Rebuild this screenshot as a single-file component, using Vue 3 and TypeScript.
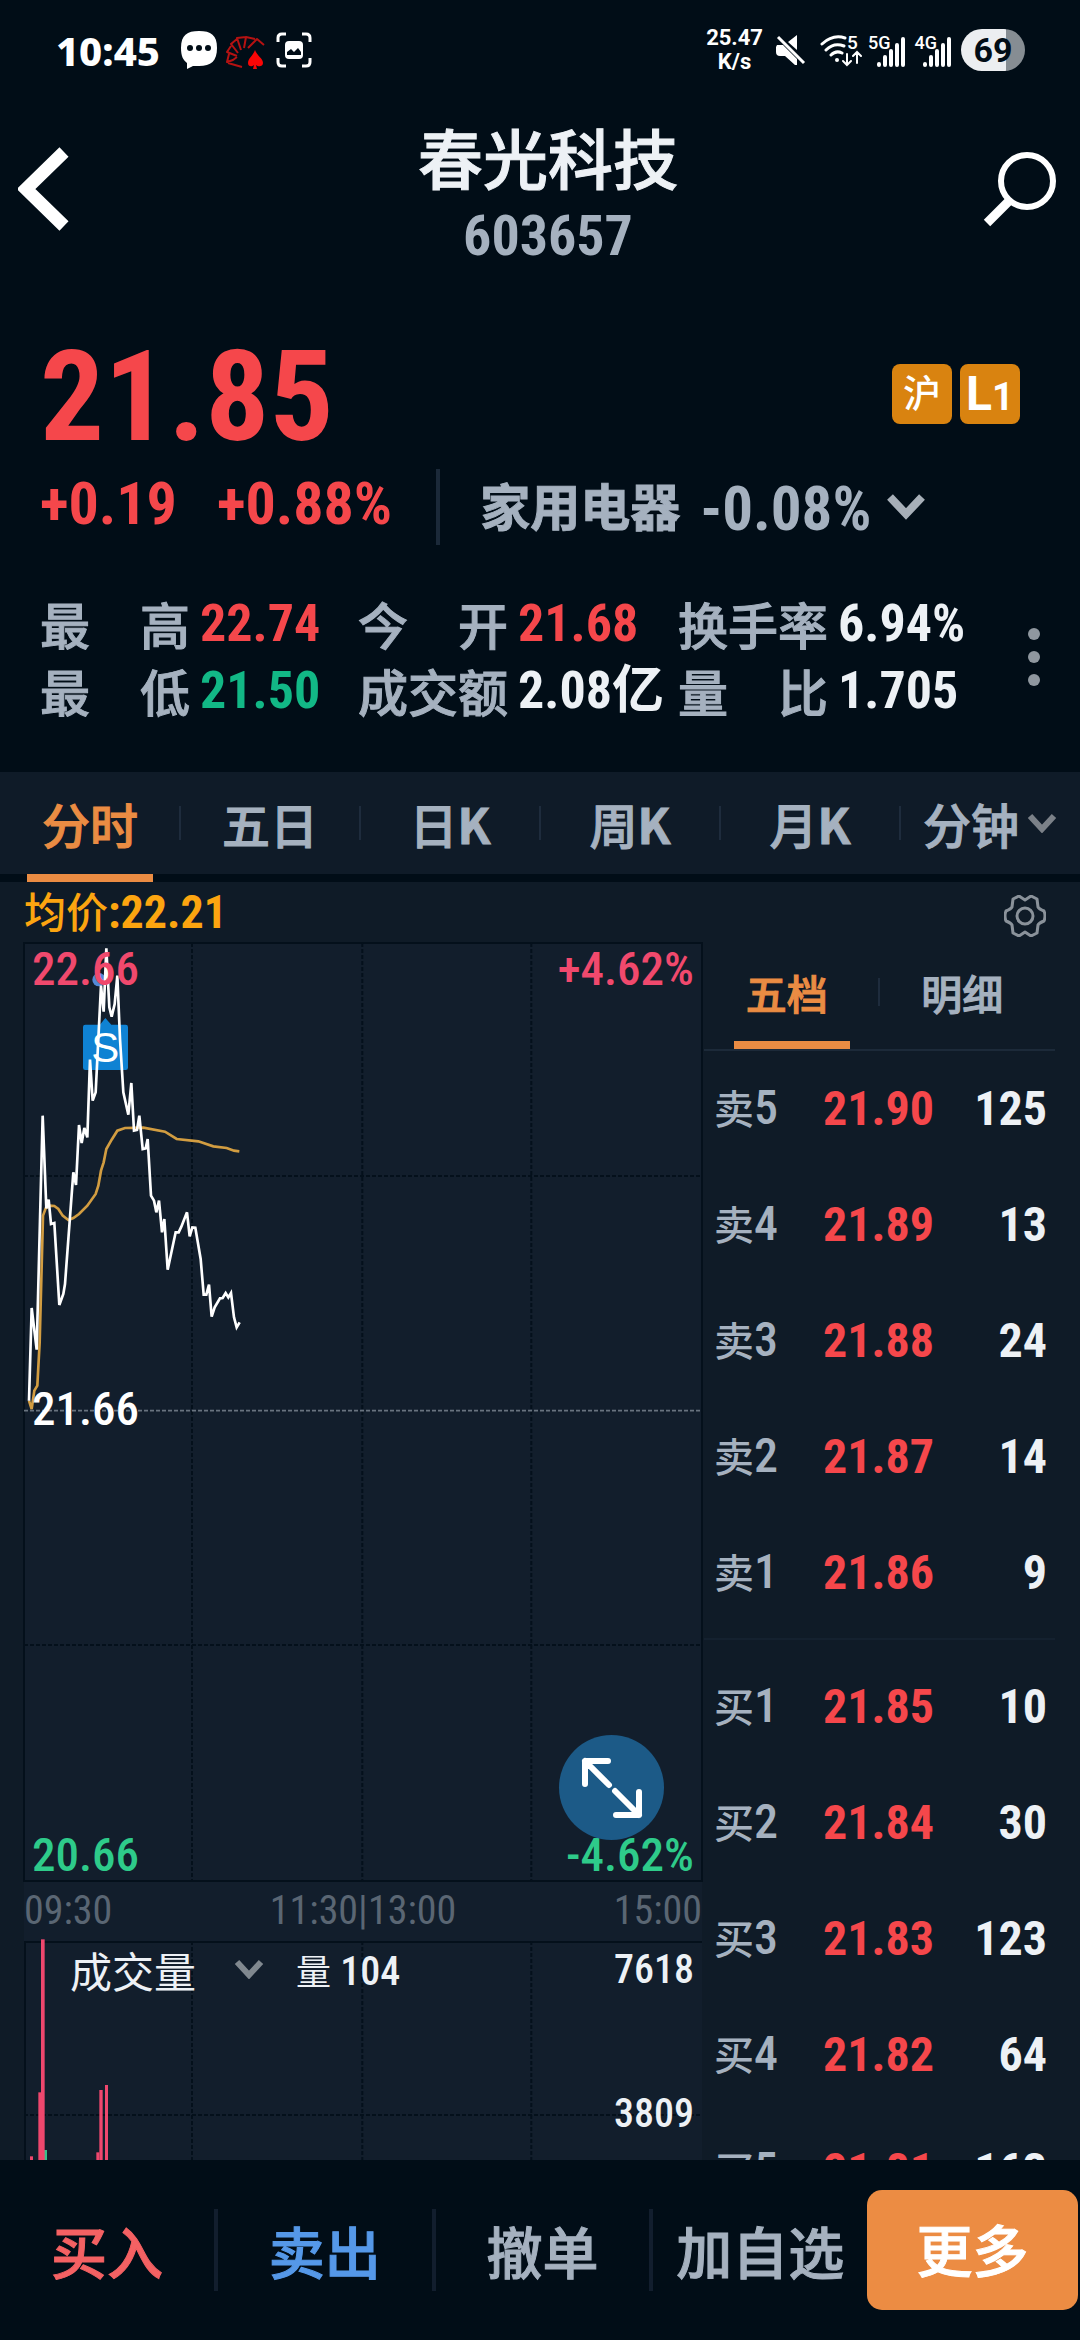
<script setup lang="ts">
import { ref } from 'vue'

interface Stat { label: string; value: string; tone: 'up' | 'down' | 'plain' }
interface Level { level: number; price: string; volume: string }
interface Side { name: string; levels: Level[] }
interface Bar { x: number; width: number; top: number; tone: 'up' | 'down' }
interface Period { text: string; latin?: string; menu?: boolean }

const stats: Stat[] = [
  { label: '最 高', value: '22.74', tone: 'up' },
  { label: '今 开', value: '21.68', tone: 'up' },
  { label: '换手率', value: '6.94%', tone: 'plain' },
  { label: '最 低', value: '21.50', tone: 'down' },
  { label: '成交额', value: '2.08亿', tone: 'plain' },
  { label: '量 比', value: '1.705', tone: 'plain' },
]

const periods: Period[] = [
  { text: '分时' },
  { text: '五日' },
  { text: '日', latin: 'K' },
  { text: '周', latin: 'K' },
  { text: '月', latin: 'K' },
  { text: '分钟', menu: true },
]
const period = ref('分时')

const bookTabs: string[] = ['五档', '明细']
const bookTab = ref('五档')

const sides: Side[] = [
  {
    name: '卖',
    levels: [
      { level: 5, price: '21.90', volume: '125' },
      { level: 4, price: '21.89', volume: '13' },
      { level: 3, price: '21.88', volume: '24' },
      { level: 2, price: '21.87', volume: '14' },
      { level: 1, price: '21.86', volume: '9' },
    ],
  },
  {
    name: '买',
    levels: [
      { level: 1, price: '21.85', volume: '10' },
      { level: 2, price: '21.84', volume: '30' },
      { level: 3, price: '21.83', volume: '123' },
      { level: 4, price: '21.82', volume: '64' },
      { level: 5, price: '21.81', volume: '163' },
    ],
  },
]

const priceLine =
  '87,1415 95,1137 110,1262 128,560 139,838 146,812 153,885 163,882 178,1128 190,1095 195,1065 220,730 228,768 237,588 245,642 253,597 262,625 270,392 278,515 287,490 303,170 311,248 319,58 328,235 335,263 344,225 352,140 360,330 370,490 385,557 394,462 402,605 411,603 418,560 428,660 437,658 443,630 453,800 462,815 469,850 477,815 486,910 493,870 503,1022 527,910 536,910 544,893 561,850 569,922 577,895 586,896 602,990 611,1097 619,1097 627,1067 635,1163 644,1135 660,1108 668,1107 677,1092 685,1105 693,1092 702,1165 710,1195 719,1180'
const averageLine =
  '87,1415 95,1440 103,1385 112,1370 119,1240 124,1050 129,860 137,838 150,830 163,831 175,840 188,860 205,873 220,867 237,855 262,830 287,795 295,770 303,725 311,700 319,660 335,632 352,605 375,597 430,596 495,608 530,630 595,637 640,652 680,657 702,665 718,667'

const bars: Bar[] = [
  { x: 90, width: 9, top: 1012, tone: 'up' },
  { x: 115, width: 9, top: 820, tone: 'up' },
  { x: 131, width: 10, top: 993, tone: 'down' },
  { x: 123, width: 11, top: 361, tone: 'up' },
  { x: 289, width: 9, top: 1000, tone: 'up' },
  { x: 298, width: 10, top: 813, tone: 'up' },
  { x: 315, width: 9, top: 798, tone: 'up' },
]
const columns: number[] = [576, 1087, 1594]
const signals: string[] = ['5G', '4G']
</script>

<template>
  <div class="app">
    <div class="status">
      <div class="status-side">
        <span class="clock">10:45</span>
        <svg class="chat" width="38" height="40" viewBox="0 0 38 40">
          <path d="M19 1C31 1 37 5 37 18S31 36 19 36H13L7 39V33C3 30 1 26 1 18C1 5 7 1 19 1Z" fill="#fff" />
          <circle cx="10" cy="18" r="3" fill="#010d17" /><circle cx="19" cy="18" r="3" fill="#010d17" /><circle cx="28" cy="18" r="3" fill="#010d17" />
        </svg>
        <svg class="cards" width="40" height="34" viewBox="0 0 40 34">
          <g fill="none" stroke="#b51212" stroke-width="2" stroke-linejoin="round">
            <path d="M38 9L31 3L22 12M29 3L20 1L18 12M20 1L11 2L15 14M11 3L5 8L12 17M5 10L1 16L11 20M3 18L1 26L7 24L11 21M2 27L16 31" />
          </g>
          <path d="M29 14C31 20 37 22 37 27C37 31 32 31 30 29L31 33H27L28 29C26 31 22 31 22 27C22 22 27 20 29 14Z" fill="#fa0606" />
        </svg>
        <svg width="36" height="36" viewBox="0 0 36 36">
          <path d="M2 10V6Q2 2 6 2H10M26 2H30Q34 2 34 6V10M34 26V30Q34 34 30 34H26M10 34H6Q2 34 2 30V26" fill="none" stroke="#fff" stroke-width="3" />
          <rect x="9" y="9" width="18" height="18" rx="4" fill="#fff" />
          <path d="M11 23V20L15 17L18 20L22 16L25 20V23Z" fill="#010d17" />
        </svg>
      </div>
      <div class="status-side">
        <span class="speed">25.47<br />K/s</span>
        <svg class="mute" width="32" height="32" viewBox="0 0 32 32">
          <path d="M22 1V16L13 8ZM2 11H8L22 25V31H20L10 22H5Q1 22 1 18V13Z" fill="#fff" />
          <path d="M3 3L29 29" stroke="#fff" stroke-width="3" />
        </svg>
        <svg class="wifi" width="42" height="34" viewBox="0 0 42 34">
          <g fill="none" stroke="#fff" stroke-width="3" stroke-linecap="round">
            <path d="M2 10Q13 0 25 4M6 16Q14 8 24 12M11 21Q16 16 22 19" />
            <path d="M27 20V31M23 27L27 31L31 27M37 29V18M33 22L37 18L41 22" stroke-width="2" />
          </g>
          <circle cx="17" cy="26" r="2" fill="#fff" />
          <text x="27" y="15" class="wifi-band">5</text>
        </svg>
        <span v-for="name in signals" :key="name" class="signal">
          <b>{{ name }}</b>
          <svg width="28" height="30" viewBox="0 0 28 30">
            <path d="M2 28V27M8 28V20M14 28V14M20 28V8M26 28V2" stroke="#fff" stroke-width="4" stroke-linecap="round" />
          </svg>
        </span>
        <span class="battery">69</span>
      </div>
    </div>

    <header class="header">
      <button class="icon-button back" aria-label="返回">
        <svg width="52" height="84" viewBox="0 0 52 84"><path d="M46 5L8 42L46 79" fill="none" stroke="#fff" stroke-width="13" /></svg>
      </button>
      <div class="names">
        <h1>春光科技</h1>
        <p>603657</p>
      </div>
      <button class="icon-button" aria-label="搜索">
        <svg width="76" height="76" viewBox="0 0 76 76">
          <circle cx="45" cy="30" r="26" fill="none" stroke="#fff" stroke-width="6" />
          <path d="M28 49L5 72" stroke="#fff" stroke-width="9" />
        </svg>
      </button>
    </header>

    <section class="quote">
      <div class="price-row">
        <span class="price up">21.85</span>
        <span class="badge">沪</span>
        <span class="badge level">L<small>1</small></span>
      </div>
      <div class="change-row">
        <span class="up">+0.19</span>
        <span class="up percent">+0.88%</span>
        <button class="sector">
          <span class="sector-name">家用电器</span><span class="sector-change">-0.08%</span>
          <svg width="38" height="28" viewBox="0 0 38 28"><path d="M3 4L19 21L35 4" fill="none" stroke="#a7afb8" stroke-width="8" /></svg>
        </button>
      </div>
      <div class="stats-row">
        <dl class="stats">
          <div v-for="stat in stats" :key="stat.label">
            <dt>{{ stat.label }}</dt>
            <dd :class="stat.tone">{{ stat.value }}</dd>
          </div>
        </dl>
        <button class="icon-button" aria-label="更多指标">
          <svg width="12" height="60" viewBox="0 0 12 60" fill="#8f979f"><circle cx="6" cy="7" r="6" /><circle cx="6" cy="30" r="6" /><circle cx="6" cy="53" r="6" /></svg>
        </button>
      </div>
    </section>

    <nav class="periods">
      <button v-for="item in periods" :key="item.text" :class="{ active: item.text === period }" @click="period = item.text">
        <span>{{ item.text }}<b v-if="item.latin">{{ item.latin }}</b></span>
        <svg v-if="item.menu" width="30" height="20" viewBox="0 0 30 20"><path d="M3 3L15 16L27 3" fill="none" stroke="#7b8188" stroke-width="6" /></svg>
      </button>
    </nav>

    <main class="body">
      <div class="average-row">
        <span class="average-price">均价<b>:22.21</b></span>
        <button class="settings" aria-label="设置">
          <svg width="42" height="42" viewBox="0 0 42 42" fill="none" stroke="#8a929a" stroke-width="3">
            <path d="M15 1L21 5L27 1L33 4L34 12Q35 14 40 16Q42 21 40 26Q35 28 34 30L33 38L27 41L21 37L15 41L9 38L8 30Q7 28 2 26Q0 21 2 16Q7 14 8 12L9 4Z" stroke-linejoin="round" />
            <circle cx="21" cy="21" r="8" />
          </svg>
        </button>
      </div>

      <div class="panels">
        <div class="charts">
          <div class="chart">
            <svg class="plot" viewBox="72 42 2034 2814" preserveAspectRatio="none">
              <g class="grid">
                <line v-for="x in columns" :key="x" :x1="x" :x2="x" y1="42" y2="2856" />
                <line x1="72" x2="2106" y1="741" y2="741" />
                <line x1="72" x2="2106" y1="2148" y2="2148" />
              </g>
              <line class="base" x1="72" x2="2106" y1="1445" y2="1445" />
              <polyline :points="averageLine" class="average" />
              <circle cx="297" cy="152" r="20" fill="#5389d8" />
              <path d="M256 287H300L316 267L334 287H377Q384 287 384 294V416Q384 423 377 423H256Q249 423 249 416V294Q249 287 256 287Z" fill="#0f82d3" />
              <polyline :points="priceLine" class="price-line" />
              <text x="316" y="400" class="marker">S</text>
            </svg>
            <span class="tag top left up-pink">22.66</span>
            <span class="tag top right up-pink">+4.62%</span>
            <span class="tag middle left">21.66</span>
            <span class="tag bottom left down-green">20.66</span>
            <span class="tag bottom right down-green">-4.62%</span>
            <button class="expand" aria-label="全屏">
              <svg width="64" height="64" viewBox="0 0 64 64" fill="none" stroke="#fff" stroke-width="6" stroke-linecap="round" stroke-linejoin="round">
                <path d="M5 28V5H28M5 5L29 29M59 36V59H36M59 59L35 35" />
              </svg>
            </button>
          </div>
          <div class="times"><span>09:30</span><span>11:30|13:00</span><span>15:00</span></div>
          <div class="volume">
            <svg class="plot" viewBox="72 366 2034 1044" preserveAspectRatio="none">
              <g class="grid">
                <line v-for="x in columns" :key="x" :x1="x" :x2="x" y1="366" y2="1410" />
                <line x1="72" x2="2106" y1="888" y2="888" />
              </g>
              <rect v-for="bar in bars" :key="bar.x" :x="bar.x" :y="bar.top" :width="bar.width" :height="1410 - bar.top" :class="bar.tone" />
            </svg>
            <div class="volume-head">
              <button>成交量
                <svg width="30" height="20" viewBox="0 0 30 20"><path d="M3 3L15 16L27 3" fill="none" stroke="#80888f" stroke-width="6" /></svg>
              </button>
              <span class="amount"><i>量</i> 104</span>
              <span class="peak">7618</span>
            </div>
            <span class="half">3809</span>
          </div>
        </div>

        <aside class="book">
          <div class="book-tabs">
            <button v-for="item in bookTabs" :key="item" :class="{ active: item === bookTab }" @click="bookTab = item">{{ item }}</button>
          </div>
          <div v-for="side in sides" :key="side.name" class="side">
            <table>
              <tbody>
                <tr v-for="row in side.levels" :key="row.level">
                  <th scope="row">{{ side.name }}<b>{{ row.level }}</b></th>
                  <td class="up">{{ row.price }}</td>
                  <td>{{ row.volume }}</td>
                </tr>
              </tbody>
            </table>
          </div>
        </aside>
      </div>
    </main>

    <footer class="actions">
      <button class="buy">买入</button>
      <button class="sell">卖出</button>
      <button>撤单</button>
      <button>加自选</button>
      <button class="more">更多</button>
    </footer>
  </div>
</template>

<style>
body {
  margin: 0;
  background: #010d17;
}
</style>

<style scoped>
.app {
  display: flex;
  flex-direction: column;
  height: 100vh;
  overflow: hidden;
  background: #010d17;
  color: #a5b1bf;
  font-family: "Roboto Condensed", "Noto Sans CJK SC", sans-serif;
  font-weight: 500;
}
button {
  padding: 0;
  border: 0;
  background: none;
  color: inherit;
  font: inherit;
  cursor: pointer;
}
svg {
  display: block;
  flex: none;
}
.up { color: #f5474b; fill: #ee476d; }
.down { color: #12b886; fill: #37bf8b; }
.plain { color: #edf1f5; }

.names h1,
.sector-name,
.stats dt,
.periods button,
.book-tabs button,
.actions button {
  font-family: "Noto Sans CJK SC", sans-serif;
  -webkit-text-stroke: 1px currentColor;
}

.status {
  display: flex;
  flex: none;
  justify-content: space-between;
  height: 100px;
  padding: 0 55px 0 56px;
  color: #fff;
  font-family: "Roboto", sans-serif;
}
.status-side {
  display: flex;
  align-items: center;
}
.clock {
  margin-right: 20px;
  font-family: "Noto Sans", sans-serif;
  font-size: 40px;
  font-weight: 800;
}
.chat { margin-right: 8px; }
.cards { margin: 6px 10px 0 0; }
.speed {
  font-size: 22px;
  font-weight: 700;
  line-height: 24px;
  text-align: center;
}
.mute { margin: 0 13px 0 12px; }
.wifi { margin: 2px 6px 0 0; }
.wifi-band {
  fill: #fff;
  font-size: 19px;
}
.signal {
  display: flex;
  margin-right: 10px;
}
.signal b {
  margin-right: -14px;
  font-size: 18px;
  font-weight: 500;
  line-height: 20px;
}
.signal svg { margin-top: 4px; }
.battery {
  width: 64px;
  height: 42px;
  border-radius: 21px;
  background: linear-gradient(90deg, #eceef1 70%, #868d93 70%);
  color: #010d17;
  font-size: 34px;
  font-weight: 700;
  line-height: 42px;
  text-align: center;
}

.header {
  display: flex;
  justify-content: space-between;
  padding: 18px 22px 0 18px;
}
.header .icon-button {
  display: flex;
  width: 76px;
  height: 142px;
  align-items: center;
}
.header .back { width: 96px; }
.names { text-align: center; }
.names h1 {
  margin: 0 0 12px;
  color: #edf1f5;
  font-size: 65px;
  font-weight: 500;
  line-height: 76px;
}
.names p {
  margin: 0;
  font-size: 56px;
  font-weight: 700;
  line-height: 60px;
}

.quote { padding: 76px 40px 48px; }
.price-row {
  display: flex;
  align-items: center;
}
.price {
  margin-right: auto;
  font-size: 127px;
  font-weight: 700;
  line-height: 110px;
}
.badge {
  width: 60px;
  height: 60px;
  margin: 0 8px 6px 0;
  border-radius: 8px;
  background: #d98310;
  color: #fff;
  font-size: 38px;
  line-height: 60px;
  text-align: center;
}
.badge.level {
  margin-right: 20px;
  font-family: "Roboto", sans-serif;
  font-size: 48px;
  font-weight: 700;
}
.badge small { font-size: 38px; }
.change-row {
  display: flex;
  height: 76px;
  margin-top: 17px;
  font-size: 60px;
  font-weight: 700;
  line-height: 70px;
}
.percent { margin-left: 40px; }
.sector {
  display: flex;
  margin-left: 44px;
  padding-left: 40px;
  border-left: 4px solid #1b2939;
}
.sector-name { font-size: 50px; }
.sector-change {
  margin: 5px 16px 0 20px;
  font-size: 61px;
}
.sector svg { margin-top: 24px; }
.stats-row {
  display: flex;
  justify-content: space-between;
  align-items: center;
  margin-top: 45px;
}
.stats {
  display: grid;
  flex: 1;
  grid-template-columns: 318px 320px 1fr;
  margin: 0;
}
.stats div {
  display: flex;
  line-height: 67px;
  white-space: nowrap;
}
.stats dt {
  width: 150px;
  margin-right: 10px;
  font-size: 50px;
  text-align-last: justify;
}
.stats dd {
  margin: 0;
  font-size: 52px;
  font-weight: 700;
}

.periods {
  display: flex;
  height: 102px;
  background: #0f1b28;
  border-bottom: 8px solid #010d17;
  flex: none;
}
.periods button {
  position: relative;
  display: flex;
  flex: 1;
  align-items: center;
  justify-content: center;
  gap: 8px;
  font-size: 48px;
}
.periods button + button::before {
  position: absolute;
  left: -1px;
  width: 2px;
  height: 34px;
  background: #1e2c3d;
  content: "";
}
.periods .active { color: #ea8c43; }
.periods .active::after {
  position: absolute;
  right: 27px;
  bottom: -8px;
  left: 27px;
  height: 8px;
  background: #ea8c43;
  content: "";
}

.body {
  flex: 1;
  min-height: 0;
  overflow: hidden;
  background: #0f1b27;
}
.average-row {
  display: flex;
  justify-content: space-between;
  align-items: center;
  height: 61px;
  padding: 0 34px 0 24px;
  color: #fca510;
}
.average-price {
  font-size: 42px;
  line-height: 50px;
}
.average-price b { font-size: 46px; }
.settings { margin-top: 6px; }
.panels { display: flex; }
.charts {
  width: 65%;
  box-sizing: border-box;
  padding-left: 24px;
}
.chart, .volume {
  position: relative;
  box-sizing: border-box;
  background: #121e2c;
}
.chart {
  height: 938px;
  outline: 2px solid #04101b;
  outline-offset: -1px;
}
.volume {
  height: 348px;
  border-top: 2px solid #04101b;
  border-left: 2px solid #04101b;
}
.plot {
  position: absolute;
  inset: 0;
  width: 100%;
  height: 100%;
}
.volume .plot {
  inset: -2px;
  width: calc(100% + 2px);
  height: 348px;
  overflow: visible;
}
.grid {
  stroke: #04101b;
  stroke-width: 6;
  stroke-dasharray: 12 6;
}
.base {
  stroke: #68737f;
  stroke-width: 5;
  stroke-dasharray: 12 6;
}
.price-line, .average {
  fill: none;
  stroke: #fff;
  stroke-width: 8;
}
.average { stroke: #d29d41; }
.marker {
  fill: #fff;
  font: 126px "Liberation Sans", sans-serif;
  text-anchor: middle;
}
.tag {
  position: absolute;
  color: #fff;
  font-size: 47px;
  line-height: 52px;
}
.left { left: 8px; }
.right { right: 8px; }
.top { top: 0; }
.middle { top: 440px; }
.bottom { bottom: 0; }
.up-pink { color: #f0496d; }
.down-green { color: #2ecb8a; }
.expand {
  position: absolute;
  right: 38px;
  bottom: 41px;
  display: grid;
  width: 105px;
  height: 105px;
  place-items: center;
  border-radius: 50%;
  background: #1c5a87;
}
.times {
  display: flex;
  justify-content: space-between;
  background: #121e2c;
  color: #5a6673;
  font-size: 40px;
  font-weight: 400;
  line-height: 60px;
}
.volume-head {
  position: relative;
  display: flex;
  align-items: center;
  height: 52px;
  padding: 0 8px 0 44px;
  color: #edf1f5;
  font-size: 40px;
}
.volume-head button {
  display: flex;
  align-items: center;
  gap: 38px;
  font-size: 42px;
  font-weight: 400;
}
.amount { margin-left: 32px; }
.amount i {
  font-size: 35px;
  font-style: normal;
  font-weight: 400;
}
.peak { margin-left: auto; }
.half {
  position: absolute;
  top: 143px;
  right: 8px;
  color: #edf1f5;
  font-size: 40px;
  line-height: 56px;
}

.book {
  flex: 1;
  padding: 0 25px 0 2px;
}
.book-tabs {
  display: flex;
  height: 106px;
  border-bottom: 2px solid #1c2a39;
}
.book-tabs button {
  position: relative;
  flex: 1;
  padding: 0 10px 8px 0;
  font-size: 41px;
}
.book-tabs button + button::before {
  position: absolute;
  top: 35px;
  left: -2px;
  width: 2px;
  height: 28px;
  background: #1e2c3d;
  content: "";
}
.book-tabs .active { color: #ea8c43; }
.book-tabs .active::after {
  position: absolute;
  right: 30px;
  bottom: 0;
  left: 30px;
  height: 8px;
  background: #ea8c43;
  content: "";
}
.book table {
  width: 100%;
  border-spacing: 0;
  table-layout: fixed;
}
.book th, .book td {
  height: 116px;
  padding: 0;
  font-size: 48px;
  font-weight: 700;
  line-height: 58px;
  text-align: right;
}
.book th {
  width: 90px;
  padding-left: 10px;
  font-size: 40px;
  font-weight: 500;
  text-align: left;
}
.book th b {
  font-size: 48px;
  font-weight: 500;
}
.book td:nth-child(2) { width: 130px; }
.book td:last-child {
  padding-right: 8px;
  color: #edf1f5;
}
.side + .side {
  margin-top: 7px;
  padding-top: 9px;
  border-top: 2px solid #14212f;
}

.actions {
  display: flex;
  flex: none;
  align-items: center;
  height: 180px;
  padding-right: 2px;
}
.actions button {
  flex: 1;
  height: 82px;
  padding-bottom: 6px;
  border-right: 4px solid #121e2e;
  font-size: 56px;
}
.actions button:nth-child(4) { border: 0; }
.actions .buy { color: #f46163; }
.actions .sell { color: #5598e8; }
.actions .more {
  flex: 0 0 211px;
  height: 120px;
  border: 0;
  border-radius: 15px;
  background: #ec8c43;
  color: #fff;
}
</style>
